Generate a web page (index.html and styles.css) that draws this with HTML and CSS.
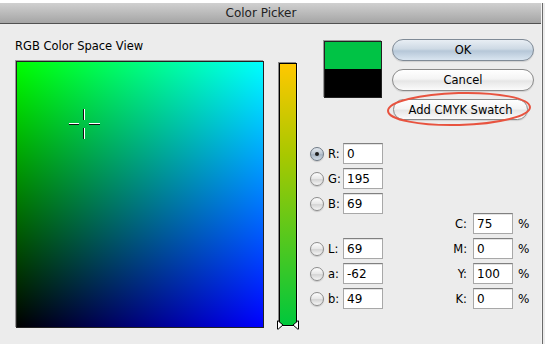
FILE: index.html
```html
<!DOCTYPE html>
<html lang="en">

<head>
    <meta charset="UTF-8">
    <title>Color Picker</title>
    <link rel="stylesheet" href="styles.css">
</head>

<body>
    <div class="screen">
        <div class="window">
            <div class="titlebar">Color Picker</div>

            <div class="content">
                <div class="view">
                    <div class="view-label">RGB Color Space View</div>
                    <div class="field">
                        <svg class="crosshair" width="32" height="32" viewBox="0 0 32 32">
                            <g stroke="#fff" stroke-width="1">
                                <line x1="1" y1="15.5" x2="11" y2="15.5" />
                                <line x1="21" y1="15.5" x2="32" y2="15.5" />
                                <line x1="16.5" y1="1" x2="16.5" y2="12" />
                                <line x1="16.5" y1="20" x2="16.5" y2="31" />
                            </g>
                            <g stroke="#111" stroke-width="1">
                                <line x1="1" y1="16.5" x2="11" y2="16.5" />
                                <line x1="21" y1="16.5" x2="32" y2="16.5" />
                                <line x1="15.5" y1="1" x2="15.5" y2="12" />
                                <line x1="15.5" y1="20" x2="15.5" y2="31" />
                            </g>
                        </svg>
                    </div>
                </div>

                <div class="slider">
                    <svg class="slider-handle" width="24" height="10" viewBox="0 0 24 10">
                        <path d="M1.5 1 Q1.5 0.5 2.2 0.9 L7 5 L2.2 9.1 Q1.5 9.5 1.5 9 Z" fill="#fff" stroke="#000" stroke-width="1" />
                        <path d="M22.5 1 Q22.5 0.5 21.8 0.9 L17 5 L21.8 9.1 Q22.5 9.5 22.5 9 Z" fill="#fff" stroke="#000" stroke-width="1" />
                    </svg>
                </div>

                <div class="panel">
                    <div class="panel-top">
                        <div class="swatch">
                            <div class="swatch-new"></div>
                            <div class="swatch-old"></div>
                        </div>
                        <div class="buttons">
                            <button class="btn btn-default">OK</button>
                            <button class="btn">Cancel</button>
                            <div class="btn-wrap">
                                <button class="btn btn-small">Add CMYK Swatch</button>
                                <svg class="ring" width="146" height="36" viewBox="0 0 146 36">
                                    <ellipse cx="73" cy="18" rx="71" ry="16" fill="none" stroke="#e8533f" stroke-width="2" transform="rotate(-1.5 73 18)" />
                                </svg>
                            </div>
                        </div>
                    </div>

                    <div class="values">
                        <div class="modes">
                            <div class="group">
                                <div class="row"><span class="radio checked"></span><span class="mode-label">R:</span><input class="num" value="0"></div>
                                <div class="row"><span class="radio"></span><span class="mode-label">G:</span><input class="num" value="195"></div>
                                <div class="row"><span class="radio"></span><span class="mode-label">B:</span><input class="num" value="69"></div>
                            </div>
                            <div class="group lab">
                                <div class="row"><span class="radio"></span><span class="mode-label">L:</span><input class="num" value="69"></div>
                                <div class="row"><span class="radio"></span><span class="mode-label">a:</span><input class="num" value="-62"></div>
                                <div class="row"><span class="radio"></span><span class="mode-label">b:</span><input class="num" value="49"></div>
                            </div>
                        </div>

                        <div class="cmyk">
                            <span class="cmyk-label">C:</span><input class="num" value="75"><span class="unit">%</span>
                            <span class="cmyk-label">M:</span><input class="num" value="0"><span class="unit">%</span>
                            <span class="cmyk-label">Y:</span><input class="num" value="100"><span class="unit">%</span>
                            <span class="cmyk-label">K:</span><input class="num" value="0"><span class="unit">%</span>
                        </div>
                    </div>
                </div>
            </div>
        </div>
        <div class="edge"></div>
    </div>
</body>

</html>
```

FILE: styles.css
```css
html,
body {
    margin: 0;
    padding: 0;
}

body {
    font-family: "DejaVu Sans", Verdana, sans-serif;
    font-size: 11.5px;
    color: #000;
    background-color: #fff;
}

.screen {
    display: flex;
    height: 344px;
    padding-top: 3px;
    box-sizing: border-box;
    background-color: #fff;
}

.window {
    width: 541px;
    background-color: #ececec;
}

.edge {
    flex: 1;
    background: linear-gradient(to right, #f4f4f4 0 1px, #6a6a6a 1px 2px, #ececec 2px);
}

.titlebar {
    height: 20px;
    line-height: 20px;
    padding-right: 19px;
    text-align: center;
    font-size: 12px;
    color: #222;
    background: linear-gradient(#d0d0d0, #a5a5a5);
    border-bottom: 1px solid #515151;
}

.content {
    display: flex;
    align-items: flex-start;
    padding: 15px 0 0 15px;
}

/* colour field */
.view {
    width: 249px;
}

.view-label {
    height: 14px;
    line-height: 14px;
    margin-bottom: 8px;
}

.field {
    position: relative;
    width: 248px;
    height: 267px;
    margin-left: 1px;
    box-sizing: border-box;
    border: 1px solid #222;
    box-shadow: -1px -1px 0 #999;
    background:
        linear-gradient(to bottom, #00ff00, #000000),
        linear-gradient(to right, #000000, #0000ff);
    background-blend-mode: screen;
}

.crosshair {
    position: absolute;
    left: 51px;
    top: 46px;
}

/* channel slider */
.slider {
    position: relative;
    width: 16px;
    height: 261px;
    margin: 24px 0 0 15px;
    border: 1px solid #000;
    box-shadow: -1px -1px 0 #8a8a8a, 1px 1px 0 #fafafa;
    background: linear-gradient(#ffc800, #a8c800 35%, #00c83c);
}

.slider-handle {
    position: absolute;
    left: -4px;
    top: 256px;
}

/* right side */
.panel {
    width: 236px;
    margin-left: 7px;
}

.panel-top {
    display: flex;
    align-items: flex-start;
}

.swatch {
    width: 58px;
    height: 57px;
    margin: 2px 0 0 20px;
    box-sizing: border-box;
    border: 1px solid #222;
    box-shadow: -1px -1px 0 #9a9a9a;
}

.swatch-new {
    height: 27px;
    background-color: #00c345;
}

.swatch-old {
    height: 28px;
    background-color: #000;
}

.buttons {
    display: flex;
    flex-direction: column;
    gap: 8px;
    width: 142px;
    margin-left: 10px;
}

.btn {
    height: 22px;
    padding: 0;
    font-family: inherit;
    font-size: 11.5px;
    color: #000;
    border: 1px solid #8a8a8a;
    border-radius: 11px;
    background: linear-gradient(#ffffff, #f4f4f4 45%, #e6e6e6 55%, #fbfbfb);
    box-shadow: 0 1px 1px rgba(0, 0, 0, 0.12);
}

.btn-default {
    border-color: #7f8a96;
    background: linear-gradient(#e8eef4, #cdd9e4 45%, #b6c7d8 55%, #d9e5f0);
}

.btn-wrap {
    position: relative;
    display: flex;
}

.btn-small {
    width: 135px;
    height: 21px;
    margin-left: 1px;
}

.ring {
    position: absolute;
    left: -6px;
    top: -8px;
}

.values {
    display: flex;
    margin-top: 23px;
    padding-left: 6px;
}

.group {
    display: flex;
    flex-direction: column;
    gap: 4px;
}

.group.lab {
    margin-top: 24px;
}

.row {
    display: flex;
    align-items: center;
    height: 21px;
}

.radio {
    position: relative;
    width: 14px;
    height: 14px;
    margin-right: 4px;
    box-sizing: border-box;
    border-radius: 50%;
    border: 1px solid #8c8c8c;
    background: linear-gradient(#fdfdfd, #e6e6e6 50%, #d4d4d4 55%, #f6f6f6);
    box-shadow: 0 1px 1px rgba(0, 0, 0, 0.15);
}

.radio.checked {
    border-color: #6f7a86;
    background: linear-gradient(#e2e8ee, #b9c4d0 50%, #a5b3c2 55%, #d2dce6);
}

.radio.checked::after {
    content: "";
    position: absolute;
    left: 4px;
    top: 4px;
    width: 4px;
    height: 4px;
    border-radius: 50%;
    background-color: #1b1b1b;
}

.mode-label {
    width: 15px;
}

.num {
    width: 40px;
    height: 21px;
    box-sizing: border-box;
    padding: 1px 3px 0;
    font-family: inherit;
    font-size: 12px;
    color: #000;
    background-color: #fff;
    border: 1px solid #a8a8a8;
    border-top-color: #808080;
    box-shadow: inset 0 1px 0 #e4e4e4;
    outline: none;
}

.cmyk {
    display: grid;
    grid-template-columns: 20px 40px auto;
    column-gap: 6px;
    row-gap: 4px;
    align-items: center;
    align-self: flex-end;
    margin-left: 64px;
}

.cmyk-label {
    text-align: right;
}

.unit {
    margin-left: -1px;
    font-size: 12px;
}
```
